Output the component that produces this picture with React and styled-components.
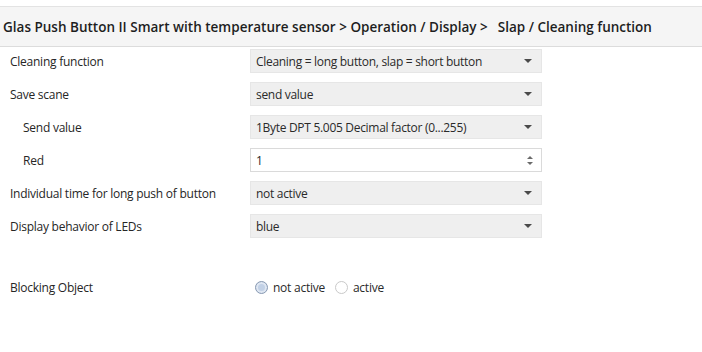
import React from "react";
import styled, { createGlobalStyle } from "styled-components";

const GlobalStyle = createGlobalStyle`
  body {
    margin: 0;
    background: #ffffff;
    font-family: "Open Sans", "Noto Sans", sans-serif;
    color: #262626;
  }
`;

const Page = styled.div`
  width: 702px;
  height: 352px;
  padding-top: 6px;
  box-sizing: border-box;
`;

const Header = styled.div`
  height: 41px;
  box-sizing: border-box;
  display: flex;
  align-items: center;
  padding: 1px 0 0 3px;
  background: #f5f5f5;
  border-top: 1px solid #e3e3e3;
  border-bottom: 1px solid #dcdcdc;
  font-size: 13.5px;
  font-weight: 600;
  color: #1e1e1e;
  white-space: nowrap;
`;

const Crumb = styled.span`
  margin-right: ${(p) => (p.$last ? 0 : 10)}px;
`;

const Form = styled.div`
  display: grid;
  grid-template-columns: 250px 292px;
  row-gap: 9px;
  padding-top: 2px;
  align-items: center;
`;

const Label = styled.div`
  padding-left: ${(p) => (p.$indent ? 23 : 10)}px;
  font-size: 12px;
  letter-spacing: -0.25px;
  color: #262626;
  margin-top: ${(p) => p.$gap || 0}px;
`;

const Select = styled.div`
  height: 24px;
  box-sizing: border-box;
  display: flex;
  align-items: center;
  justify-content: space-between;
  padding: 0 9px 0 5px;
  background: #efefef;
  border: 1px solid #e6e6e6;
  font-size: 12px;
  letter-spacing: -0.3px;
  color: #2a2a2a;
`;

const Arrow = styled.span`
  width: 0;
  height: 0;
  border-left: 4px solid transparent;
  border-right: 4px solid transparent;
  border-top: 4px solid #4a4a4a;
`;

const NumberInput = styled(Select)`
  background: #ffffff;
  border: 1px solid #dadada;
  padding-right: 8px;
`;

const Spinner = styled.span`
  display: flex;
  flex-direction: column;
  gap: 3px;
`;

const Tri = styled.span`
  width: 0;
  height: 0;
  border-left: 3px solid transparent;
  border-right: 3px solid transparent;
  ${(p) =>
    p.$up
      ? "border-bottom: 3px solid #6a6a6a;"
      : "border-top: 3px solid #6a6a6a;"}
`;

const RadioGroup = styled.div`
  display: flex;
  align-items: center;
  height: 24px;
  padding-left: 5px;
  font-size: 12px;
  letter-spacing: -0.25px;
  color: #2a2a2a;
  margin-top: ${(p) => p.$gap || 0}px;
`;

const RadioOption = styled.label`
  display: flex;
  align-items: center;
  margin-right: 10px;
`;

const Circle = styled.span`
  width: 13px;
  height: 13px;
  box-sizing: border-box;
  border-radius: 50%;
  margin-right: 5px;
  border: 1px solid ${(p) => (p.$checked ? "#8a9bb3" : "#c9c9c9")};
  background: ${(p) => (p.$checked ? "#c2d1e6" : "#ffffff")};
  box-shadow: ${(p) => (p.$checked ? "inset 0 0 0 2px #dfe7f2" : "none")};
`;

const rows = [
  { label: "Cleaning function", value: "Cleaning = long button, slap = short button" },
  { label: "Save scane", value: "send value" },
  { label: "Send value", value: "1Byte DPT 5.005 Decimal factor (0...255)", indent: true },
  { label: "Red", value: "1", indent: true, number: true },
  { label: "Individual time for long push of button", value: "not active" },
  { label: "Display behavior of LEDs", value: "blue" },
];

export default function App() {
  return (
    <Page>
      <GlobalStyle />
      <Header>
        <Crumb>Glas Push Button II Smart with temperature sensor &gt; Operation / Display &gt;</Crumb>
        <Crumb $last>Slap / Cleaning function</Crumb>
      </Header>
      <Form>
        {rows.map((r) => (
          <React.Fragment key={r.label}>
            <Label $indent={r.indent}>{r.label}</Label>
            {r.number ? (
              <NumberInput>
                {r.value}
                <Spinner>
                  <Tri $up />
                  <Tri />
                </Spinner>
              </NumberInput>
            ) : (
              <Select>
                {r.value}
                <Arrow />
              </Select>
            )}
          </React.Fragment>
        ))}
        <Label $gap={28}>Blocking Object</Label>
        <RadioGroup $gap={28}>
          <RadioOption>
            <Circle $checked />
            not active
          </RadioOption>
          <RadioOption>
            <Circle />
            active
          </RadioOption>
        </RadioGroup>
      </Form>
    </Page>
  );
}
